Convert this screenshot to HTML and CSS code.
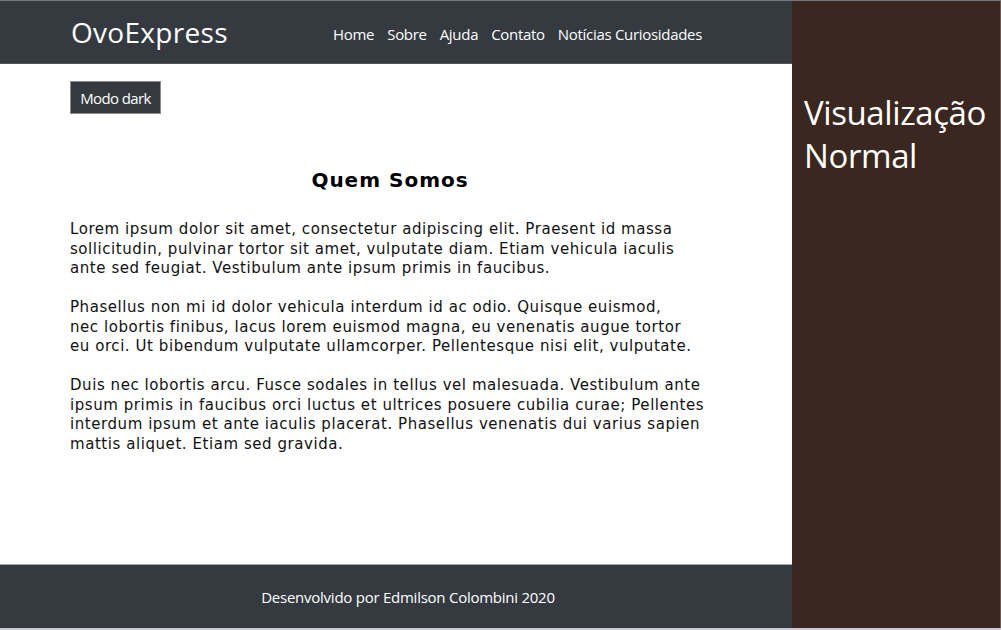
FILE: index.html
```html
<!DOCTYPE html>
<html lang="pt-BR">
<head>
<meta charset="utf-8">
<title>OvoExpress</title>
<link rel="stylesheet" href="styles.css">
</head>
<body>
<div class="frame">
  <div class="site">
    <header class="topbar">
      <div class="logo">OvoExpress</div>
      <nav class="nav">
        <a href="#">Home</a>
        <a href="#">Sobre</a>
        <a href="#">Ajuda</a>
        <a href="#">Contato</a>
        <a href="#">Notícias Curiosidades</a>
      </nav>
    </header>
    <main class="content">
      <button class="dark-btn">Modo dark</button>
      <h1 class="title">Quem Somos</h1>
      <p>Lorem ipsum dolor sit amet, consectetur adipiscing elit. Praesent id massa sollicitudin, pulvinar tortor sit amet, vulputate diam. Etiam vehicula iaculis ante sed feugiat. Vestibulum ante ipsum primis in faucibus.</p>
      <p>Phasellus non mi id dolor vehicula interdum id ac odio. Quisque euismod,<br>nec lobortis finibus, lacus lorem euismod magna, eu venenatis augue tortor eu orci. Ut bibendum vulputate ullamcorper. Pellentesque nisi elit, vulputate.</p>
      <p>Duis nec lobortis arcu. Fusce sodales in tellus vel malesuada. Vestibulum ante ipsum primis in faucibus orci luctus et ultrices posuere cubilia curae; Pellentes interdum ipsum et ante iaculis placerat. Phasellus venenatis dui varius sapien mattis aliquet. Etiam sed gravida.</p>
    </main>
    <footer class="footer">Desenvolvido por Edmilson Colombini 2020</footer>
  </div>
  <aside class="panel">
    <div class="panel-title">Visualização<br>Normal</div>
  </aside>
</div>
</body>
</html>
```
FILE: styles.css
```css
html, body {
  margin: 0;
  padding: 0;
  background: #c9c9d8;
}
body {
  width: 1001px;
  height: 630px;
  overflow: hidden;
}
.frame {
  display: flex;
  height: 627px;
  border-top: 1px solid #77767f;
}
.site {
  width: 792px;
  display: flex;
  flex-direction: column;
  background: #fff;
}
.topbar {
  height: 62px;
  background: #343a40;
  border-bottom: 1px solid #4d5158;
  display: flex;
  align-items: center;
  padding-left: 71px;
  font-family: "Open Sans", sans-serif;
  color: #fff;
}
.logo {
  font-size: 28px;
  letter-spacing: 0.3px;
  width: 262px;
}
.nav {
  display: flex;
  gap: 13px;
  font-size: 15px;
  letter-spacing: -0.3px;
  padding-top: 3px;
}
.nav a {
  color: #fff;
  text-decoration: none;
}
.content {
  flex: 1;
  padding: 17px 87px 0 70px;
  font-family: "DejaVu Sans", Verdana, sans-serif;
  font-size: 15px;
  letter-spacing: 0.56px;
  line-height: 19.5px;
  color: #111;
}
.dark-btn {
  display: block;
  width: 91px;
  height: 33px;
  background: #343a40;
  border: 1px solid #8a8c90;
  color: #fff;
  font-family: "Open Sans", sans-serif;
  font-size: 15px;
  letter-spacing: -0.6px;
  padding: 0;
  margin: 0;
}
.title {
  text-align: center;
  font-size: 20px;
  font-weight: bold;
  letter-spacing: 1px;
  margin: 54px 0 28px;
  line-height: 24px;
  color: #000;
  padding-left: 5px;
}
.content p {
  margin: 0 0 19.5px;
}
.footer {
  height: 63px;
  border-top: 1px solid #a9a9a9;
  background: #343a40;
  color: #fff;
  font-family: "Open Sans", sans-serif;
  font-size: 15px;
  letter-spacing: -0.25px;
  display: flex;
  align-items: center;
  justify-content: center;
  padding-left: 24px;
}
.panel {
  flex: 1;
  background: #3a2820;
  border-right: 1px solid #6a5a52;
  padding: 90px 0 0 12px;
}
.panel-title {
  font-family: "Open Sans", sans-serif;
  font-size: 33px;
  line-height: 43px;
  color: #fff;
  letter-spacing: -0.4px;
}
```
